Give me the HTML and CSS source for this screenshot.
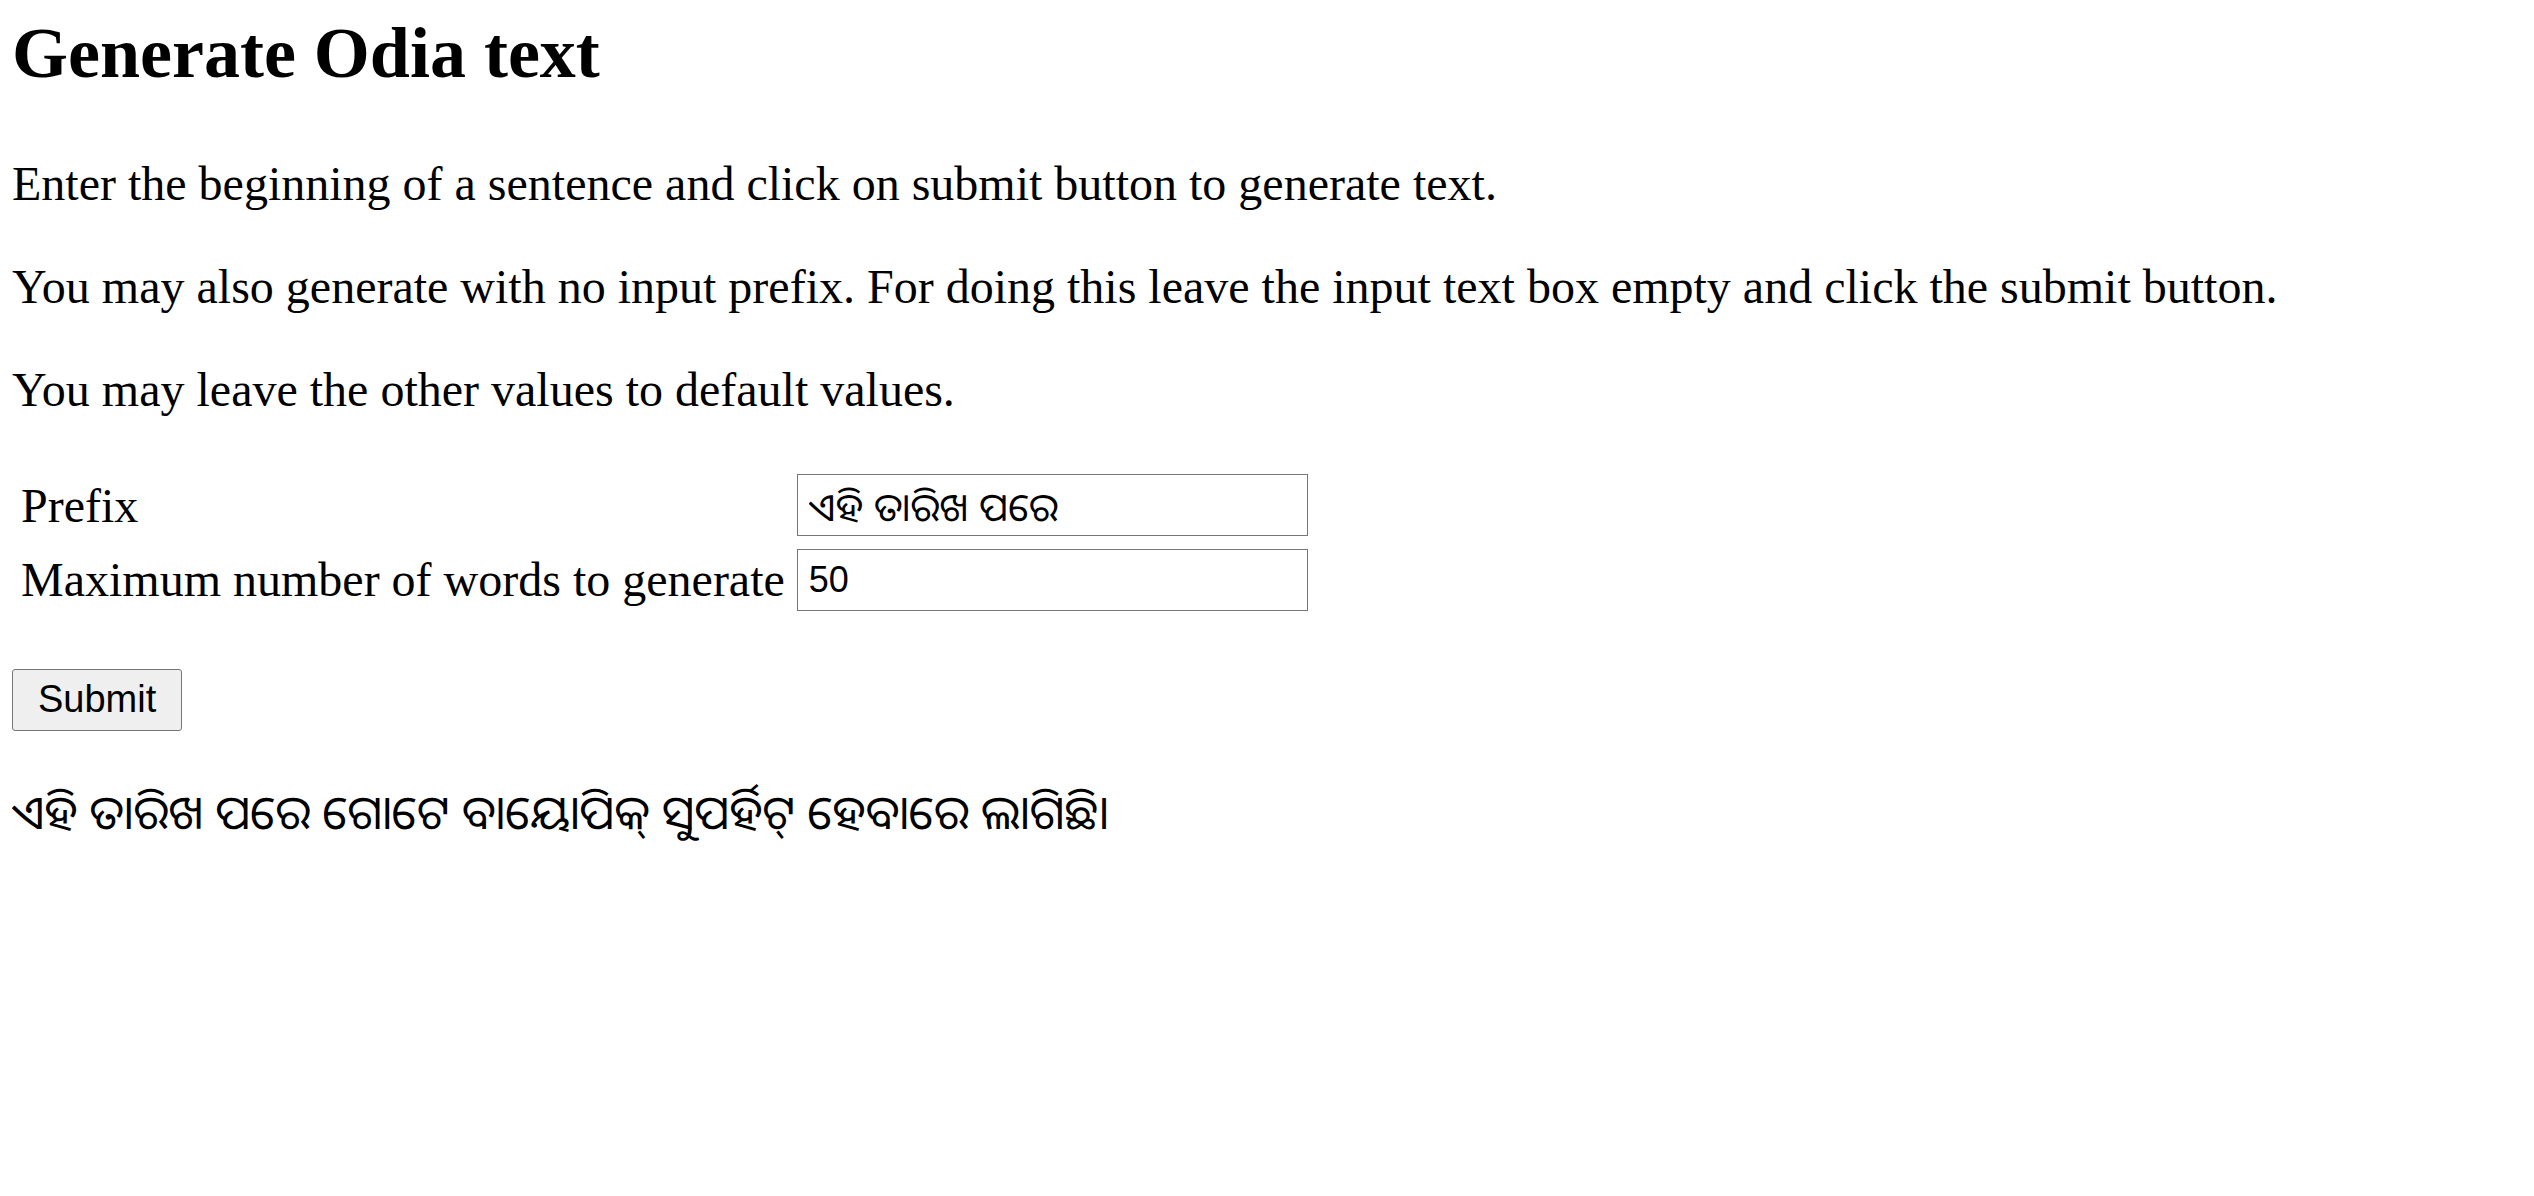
FILE: index.html
```html
<!DOCTYPE html>
<html lang="en">
<head>
<meta charset="utf-8">
<title>Generate Odia text</title>
<link rel="stylesheet" href="styles.css">
</head>
<body>
<h1 class="title">Generate Odia text</h1>
<p class="info">Enter the beginning of a sentence and click on submit button to generate text.</p>
<p class="info">You may also generate with no input prefix. For doing this leave the input text box empty and click the submit button.</p>
<p class="info">You may leave the other values to default values.</p>
<form class="gen-form">
  <table class="fields">
    <tr>
      <td class="label">Prefix</td>
      <td><input class="field field-odia" type="text" value="ଏହି ତାରିଖ ପରେ"></td>
    </tr>
    <tr>
      <td class="label">Maximum number of words to generate</td>
      <td><input class="field" type="text" value="50"></td>
    </tr>
  </table>
  <div class="submit-row"><button class="submit" type="button">Submit</button></div>
</form>
<p class="output">ଏହି ତାରିଖ ପରେ ଗୋଟେ ବାୟୋପିକ୍ ସୁପର୍ହିଟ୍ ହେବାରେ ଲାଗିଛି।</p>
</body>
</html>
```
FILE: styles.css
```css
body {
  margin: 12px;
  font-family: "Liberation Serif", "Times New Roman", serif;
  font-size: 48px;
  color: #000;
  background: #fff;
}
.title {
  font-size: 72px;
  font-weight: bold;
  margin: 0 0 61px;
  line-height: normal;
}
.info {
  margin: 48px 0;
}
.gen-form {
  margin: 0;
}
.fields {
  border-spacing: 6px;
  margin: 0;
}
.fields td {
  padding: 3px;
  vertical-align: middle;
}
.label {
  white-space: nowrap;
}
.field {
  box-sizing: border-box;
  width: 511px;
  height: 62px;
  padding: 0 11px;
  border: 1px solid #767676;
  border-radius: 0;
  font-family: "Liberation Sans", Arial, "Noto Sans Oriya", "Noto Sans", sans-serif;
  font-size: 36px;
  color: #000;
  background: #fff;
  margin: 0;
}
.field-odia {
  font-size: 39px;
}
.submit-row {
  margin-top: 48px;
}
.submit {
  box-sizing: border-box;
  height: 62px;
  padding: 0 25px;
  border: 1px solid #767676;
  border-radius: 3px;
  background: #efefef;
  font-family: "Liberation Sans", Arial, sans-serif;
  font-size: 38px;
  color: #000;
  margin: 0;
}
.output {
  font-family: "Noto Sans Oriya", "Lohit Odia", "Noto Sans", sans-serif;
  font-size: 47px;
  margin: 48px 0;
}
```
